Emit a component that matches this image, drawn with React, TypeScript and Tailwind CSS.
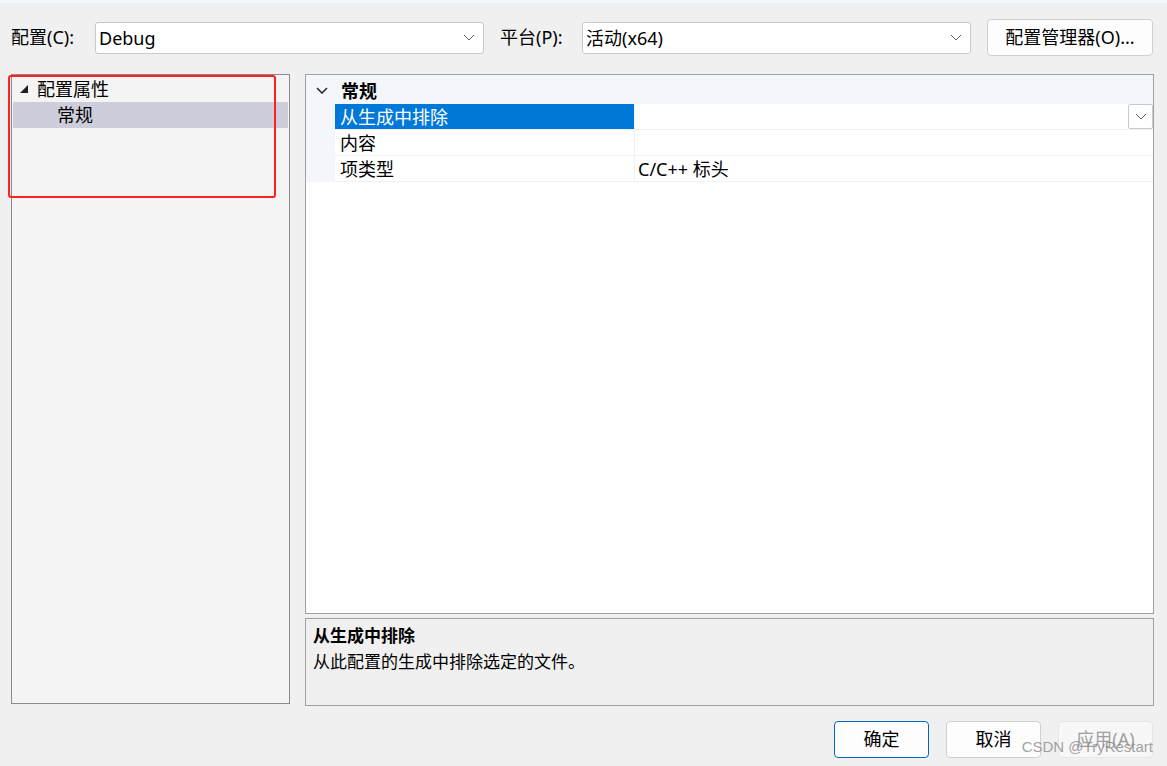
import React from "react";

const font = "font-['Noto_Sans','Noto_Sans_CJK_SC',sans-serif]";

function Chevron({ className = "", bold = false }: { className?: string; bold?: boolean }) {
  return (
    <svg className={className} width="12" height="7" viewBox="0 0 12 7" fill="none">
      <path d="M1 1l5 5 5-5" stroke={bold ? "#2b2b2b" : "#606060"} strokeWidth={bold ? 1.6 : 1} />
    </svg>
  );
}

function Select({ value, width }: { value: string; width: string }) {
  return (
    <div
      className={`${width} h-[32px] flex items-center justify-between bg-white border border-[#c9c9c9] rounded-[3px] pl-[3px] pr-[8px]`}
    >
      <span className="text-[18px] leading-[26px] text-black">{value}</span>
      <Chevron />
    </div>
  );
}

function DialogButton({
  text,
  kind = "normal",
}: {
  text: string;
  kind?: "primary" | "normal" | "disabled";
}) {
  const styles = {
    primary: "border-[#0067c0] bg-[#fdfdfd] text-black",
    normal: "border-[#d0d0d0] bg-[#fdfdfd] text-black",
    disabled: "border-[#e6e6e6] bg-[#f7f7f7] text-[#a0a0a0]",
  }[kind];
  return (
    <div
      className={`w-[95px] h-[37px] flex items-center justify-center border rounded-[4px] text-[18px] ${styles}`}
    >
      {text}
    </div>
  );
}

const rows = [
  { name: "从生成中排除", value: "", selected: true },
  { name: "内容", value: "" },
  { name: "项类型", value: "C/C++ 标头" },
];

export default function App() {
  return (
    <div className={`relative w-[1167px] h-[766px] overflow-hidden bg-[#f0f0f0] ${font} text-black`}>
      <div className="h-[3px] bg-[#f4f7fc]" />

      {/* toolbar */}
      <div className="mt-[16px] h-[37px] flex items-center">
        <div className="w-[95px] pl-[11px] text-[18px]">配置(C):</div>
        <Select value="Debug" width="w-[389px]" />
        <div className="w-[98px] pl-[16px] text-[18px]">平台(P):</div>
        <Select value="活动(x64)" width="w-[389px]" />
        <div className="ml-[16px] w-[166px] h-[37px] flex items-center justify-center bg-[#fdfdfd] border border-[#d0d0d0] rounded-[4px] text-[18px]">
          配置管理器(O)...
        </div>
      </div>

      {/* main */}
      <div className="mt-[18px] flex items-start pl-[11px]">
        <div className="w-[279px] h-[630px] bg-[#f4f4f4] border border-[#8a8a92] p-px">
          <div className="h-[26px] flex items-center text-[18px] leading-[26px]">
            <svg className="ml-[7px] mr-[9px]" width="8" height="8" viewBox="0 0 8 8">
              <path d="M8 0V8H0Z" fill="#1e1e1e" />
            </svg>
            配置属性
          </div>
          <div className="h-[26px] flex items-center bg-[#cccedb] pl-[44px] text-[18px] leading-[26px]">
            常规
          </div>
        </div>

        <div className="ml-[15px] w-[849px] flex flex-col gap-[4px]">
          <div className="h-[540px] bg-white border border-[#a0a0a0]">
            <div className="h-[29px] flex items-center bg-[#f3f6fb] pt-[2px]">
              <Chevron bold className="ml-[10px] mr-[13px]" />
              <span className="font-bold text-[18px] leading-[26px]">常规</span>
            </div>
            {rows.map((r) => (
              <div key={r.name} className="h-[26px] flex bg-[#f3f6fb]">
                <div className="w-[29px]" />
                <div
                  className={`w-[299px] pl-[5px] text-[18px] leading-[26px] border-b border-[#eef1f8] ${
                    r.selected ? "bg-[#0078d7] text-white" : "bg-white"
                  }`}
                >
                  {r.name}
                </div>
                <div className="flex-1 flex items-start justify-between bg-white pl-[3px] text-[18px] leading-[26px] border-b border-l border-[#eef1f8]">
                  <span>{r.value}</span>
                  {r.selected && (
                    <div className="w-[25px] h-[25px] flex items-center justify-center border border-[#c9c9c9] rounded-[2px] bg-white">
                      <Chevron />
                    </div>
                  )}
                </div>
              </div>
            ))}
          </div>

          <div className="h-[88px] bg-[#f0f0f0] border border-[#a0a0a0] pl-[7px] pt-[4px]">
            <div className="font-bold text-[17px] leading-[26px]">从生成中排除</div>
            <div className="text-[17px] leading-[26px]">从此配置的生成中排除选定的文件。</div>
          </div>
        </div>
      </div>

      {/* buttons */}
      <div className="mt-[15px] flex justify-end gap-[17px] pr-[14px]">
        <DialogButton text="确定" kind="primary" />
        <DialogButton text="取消" />
        <DialogButton text="应用(A)" kind="disabled" />
      </div>

      {/* annotation + watermark */}
      <div className="absolute left-[8px] top-[75px] w-[268px] h-[123px] border-2 border-[#ff2020] rounded-[3px]" />
      <div className="absolute right-[14px] top-[737px] text-[15px] leading-[20px] text-[#8a8a8a]/80 font-['Liberation_Sans',sans-serif]">
        CSDN @TryRestart
      </div>
    </div>
  );
}
